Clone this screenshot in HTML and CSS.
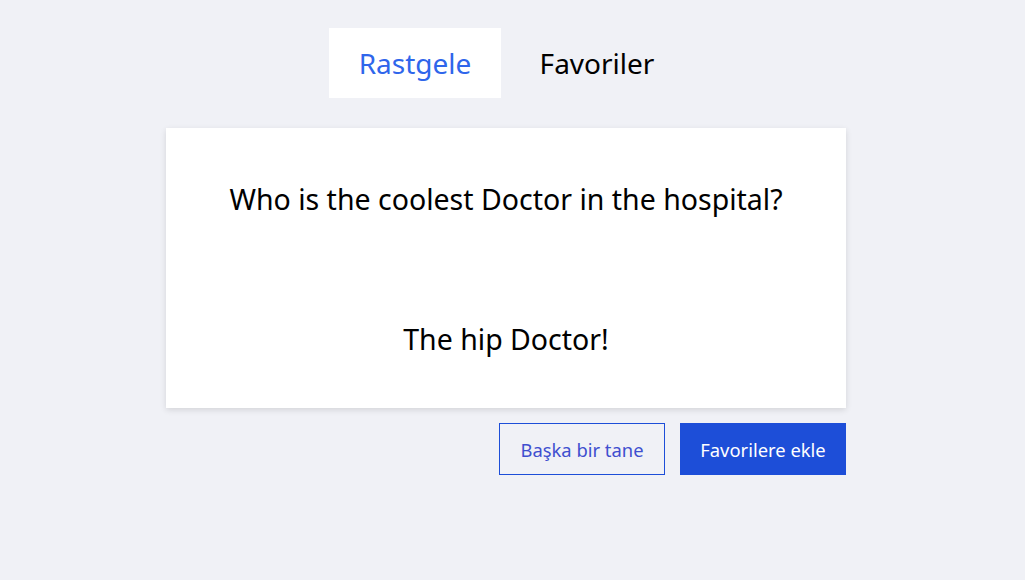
FILE: index.html
```html
<!DOCTYPE html>
<html lang="tr">
<head>
<meta charset="utf-8">
<title>Şakalar</title>
<link rel="stylesheet" href="styles.css">
</head>
<body>
<main class="page">
  <nav class="tabs">
    <button class="tab tab-active">Rastgele</button>
    <button class="tab">Favoriler</button>
  </nav>
  <section class="card">
    <p class="setup">Who is the coolest Doctor in the hospital?</p>
    <p class="punchline">The hip Doctor!</p>
  </section>
  <div class="actions">
    <button class="btn btn-outline">Başka bir tane</button>
    <button class="btn btn-solid">Favorilere ekle</button>
  </div>
</main>
</body>
</html>
```

FILE: styles.css
```css
html, body {
  margin: 0;
  padding: 0;
  background: #f0f1f6;
}
body {
  font-family: "Noto Sans", "Open Sans", sans-serif;
  color: #000;
}
.page {
  width: 1012px;
  display: flex;
  flex-direction: column;
  align-items: center;
  padding-top: 28px;
}
.tabs {
  display: flex;
  gap: 10px;
}
.tab {
  width: 172px;
  height: 70px;
  border: 0;
  background: transparent;
  font-family: inherit;
  font-size: 28px;
  color: #000;
  padding: 0;
  cursor: pointer;
}
.tab-active {
  background: #fff;
  color: #2f66eb;
}
.card {
  margin-top: 30px;
  width: 680px;
  height: 280px;
  box-sizing: border-box;
  background: #fff;
  box-shadow: 0 2px 6px rgba(0, 0, 0, 0.12);
  display: flex;
  flex-direction: column;
  align-items: center;
  padding-top: 51px;
}
.setup, .punchline {
  margin: 0;
  font-size: 28.5px;
  line-height: 40px;
  text-align: center;
}
.punchline {
  margin-top: 100px;
}
.actions {
  width: 680px;
  display: flex;
  justify-content: flex-end;
  gap: 15px;
  margin-top: 15px;
}
.btn {
  width: 166px;
  height: 52px;
  font-family: inherit;
  font-size: 18.4px;
  box-sizing: border-box;
  cursor: pointer;
}
.btn-outline {
  background: transparent;
  border: 1px solid #1d4ed8;
  color: #3f4fcf;
}
.btn-solid {
  background: #1d4ed8;
  border: 0;
  color: #fff;
}
```
